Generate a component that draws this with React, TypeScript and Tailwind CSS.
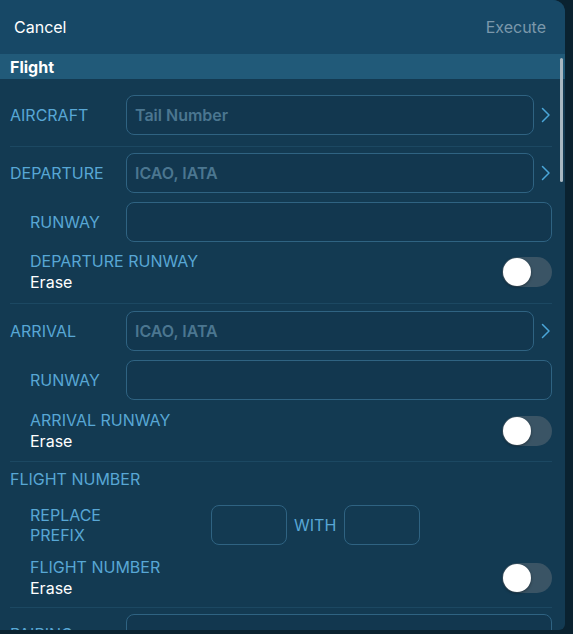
import React from "react";

const font = { fontFamily: "Inter, 'Noto Sans', sans-serif" };

function Chevron() {
  return (
    <svg width="10" height="16" viewBox="0 0 10 16" className="shrink-0">
      <path d="M1.5 1.5 L8 8 L1.5 14.5" fill="none" stroke="#4aa6d8" strokeWidth="1.5" strokeLinecap="round" strokeLinejoin="round" />
    </svg>
  );
}

function Input({ placeholder, className = "" }: { placeholder?: string; className?: string }) {
  return (
    <div className={`h-[40px] rounded-[8px] border border-[#2f6382] bg-[#12374f] flex items-center px-[8px] text-[16px] font-semibold text-[#4b7690] ${className}`}>
      {placeholder}
    </div>
  );
}

function Toggle() {
  return (
    <div className="w-[50px] h-[30px] rounded-full bg-[#3a5465] p-[1px] flex items-center shrink-0">
      <div className="w-[28px] h-[28px] rounded-full bg-white shadow-[0_1px_3px_rgba(0,0,0,0.4)]" />
    </div>
  );
}

function Sep({ className = "" }: { className?: string }) {
  return <div className={`h-px bg-[#1c4862] mr-[13px] ${className}`} />;
}

function LabeledInput({ label, placeholder, chevron, indent, className = "" }: { label: string; placeholder?: string; chevron?: boolean; indent?: boolean; className?: string }) {
  return (
    <div className={`flex items-center h-[40px] ${className}`}>
      <div className={`w-[116px] shrink-0 text-[16px] text-[#58a7d5] ${indent ? "pl-[20px]" : ""}`}>{label}</div>
      <Input placeholder={placeholder} className="flex-1" />
      {chevron ? (
        <div className="w-[31px] flex justify-start pl-[7px]"><Chevron /></div>
      ) : (
        <div className="w-[13px]" />
      )}
    </div>
  );
}

function ToggleRow({ label, className = "" }: { label: string; className?: string }) {
  return (
    <div className={`flex items-center justify-between h-[30px] pr-[13px] ${className}`}>
      <div className="pl-[20px] leading-[21px] text-[16px]">
        <div className="text-[#58a7d5]">{label}</div>
        <div className="text-white">Erase</div>
      </div>
      <Toggle />
    </div>
  );
}

export default function App() {
  return (
    <div className="w-[573px] h-[634px] bg-[#0a2230] overflow-hidden" style={font}>
      <div className="w-[565px] h-[630px] rounded-tr-[12px] rounded-br-[6px] bg-[#133a52] overflow-hidden relative flex flex-col">
        <div className="h-[54px] shrink-0 bg-[#174866] flex items-center justify-between pl-[14px] pr-[19px] text-[16px]">
          <span className="text-white">Cancel</span>
          <span className="text-[#7b98ab]">Execute</span>
        </div>
        <div className="h-[25px] shrink-0 bg-[#215a79] flex items-center pl-[10px] text-[16px] font-bold text-white">Flight</div>
        <div className="pl-[10px] flex flex-col">
          <LabeledInput label="AIRCRAFT" placeholder="Tail Number" chevron className="mt-[16px]" />
          <Sep className="mt-[11px]" />
          <LabeledInput label="DEPARTURE" placeholder="ICAO, IATA" chevron className="mt-[6px]" />
          <LabeledInput label="RUNWAY" indent className="mt-[9px]" />
          <ToggleRow label="DEPARTURE RUNWAY" className="mt-[15px]" />
          <Sep className="mt-[16px]" />
          <LabeledInput label="ARRIVAL" placeholder="ICAO, IATA" chevron className="mt-[7px]" />
          <LabeledInput label="RUNWAY" indent className="mt-[9px]" />
          <ToggleRow label="ARRIVAL RUNWAY" className="mt-[16px]" />
          <Sep className="mt-[15px]" />
          <div className="mt-[7px] h-[21px] leading-[21px] text-[16px] text-[#58a7d5]">FLIGHT NUMBER</div>
          <div className="mt-[15px] flex items-center h-[40px]">
            <div className="w-[201px] pl-[20px] leading-[20px] text-[16px] text-[#58a7d5]">REPLACE<br />PREFIX</div>
            <div className="w-[76px] h-[40px] rounded-[8px] border border-[#2f6382]" />
            <div className="w-[57px] pl-[7px] text-[16px] text-[#58a7d5]">WITH</div>
            <div className="w-[76px] h-[40px] rounded-[8px] border border-[#2f6382]" />
          </div>
          <ToggleRow label="FLIGHT NUMBER" className="mt-[18px]" />
          <Sep className="mt-[14px]" />
          <LabeledInput label="PAIRING" indent={false} className="mt-[6px]" />
        </div>
        <div className="absolute right-[2px] top-[58px] w-[3px] h-[124px] rounded-full bg-[#a9b8c2]" />
      </div>
    </div>
  );
}
